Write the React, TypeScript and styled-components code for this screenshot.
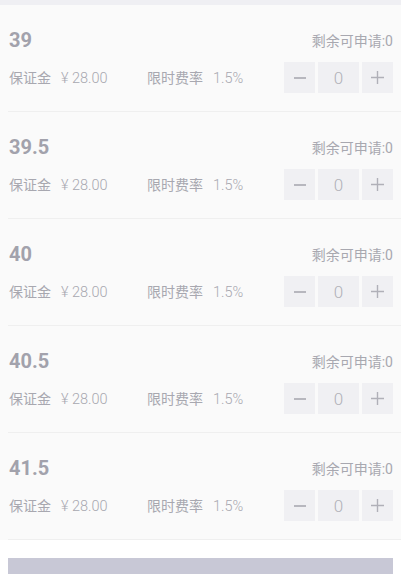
import styled, { createGlobalStyle } from "styled-components";

const GlobalStyle = createGlobalStyle`
  html, body {
    margin: 0;
    padding: 0;
    background: #fafafa;
  }
  body {
    font-family: Roboto, "Noto Sans CJK SC", sans-serif;
  }
`;

const Page = styled.div`
  width: 401px;
  height: 574px;
  overflow: hidden;
  background: #fafafa;
  border-top: 5px solid #efeff3;
  box-sizing: border-box;
`;

const List = styled.div`
  display: flex;
  flex-direction: column;
`;

const Item = styled.div`
  display: flex;
  flex-direction: column;
  padding: 23px 8px 20px 9px;
  height: 107px;
  box-sizing: border-box;
  position: relative;

  &::after {
    content: "";
    position: absolute;
    left: 8px;
    right: 0;
    bottom: 0;
    height: 1px;
    background: #efefef;
  }
`;

const Head = styled.div`
  display: flex;
  justify-content: space-between;
  align-items: center;
  height: 24px;
`;

const Size = styled.span`
  font-size: 20px;
  font-weight: 700;
  color: #a2a2ac;
`;

const Remain = styled.span`
  font-size: 14px;
  color: #a8a8b0;
`;

const Body = styled.div`
  display: flex;
  align-items: center;
  margin-top: 10px;
`;

const Info = styled.span<{ $width: number }>`
  width: ${p => p.$width}px;
  display: flex;
  align-items: baseline;
  gap: 10px;
  color: #a8a8b0;
  margin-top: -2px;
`;

const Label = styled.span`
  font-size: 14px;
`;

const Value = styled.span`
  font-size: 14.5px;
  font-weight: 300;
  white-space: pre;
`;

const Stepper = styled.div`
  margin-left: auto;
  display: flex;
  gap: 2px;
`;

const StepButton = styled.div`
  width: 31px;
  height: 31px;
  background: #f0f0f3;
  display: flex;
  align-items: center;
  justify-content: center;
  color: #b0b0b8;
`;

const StepValue = styled(StepButton)`
  width: 41px;
  margin: 0 1px;
  font-size: 17px;
  font-weight: 300;
  color: #b0b0b8;
`;

const Footer = styled.div`
  background: #fff;
  padding: 18px 8px 0 8px;
`;

const SubmitBar = styled.div`
  height: 30px;
  background: #c8c8d6;
`;

const sizes = ["39", "39.5", "40", "40.5", "41.5"];

export default function App() {
  return (
    <Page>
      <GlobalStyle />
      <List>
        {sizes.map(s => (
          <Item key={s}>
            <Head>
              <Size>{s}</Size>
              <Remain>剩余可申请:0</Remain>
            </Head>
            <Body>
              <Info $width={138}>
                <Label>保证金</Label>
                <Value>¥ 28.00</Value>
              </Info>
              <Info $width={110}>
                <Label>限时费率</Label>
                <Value>1.5%</Value>
              </Info>
              <Stepper>
                <StepButton>
                  <svg width="12" height="12" viewBox="0 0 12 12">
                    <path d="M0 6h12" stroke="currentColor" strokeWidth="1.8" />
                  </svg>
                </StepButton>
                <StepValue>0</StepValue>
                <StepButton>
                  <svg width="13" height="13" viewBox="0 0 13 13">
                    <path d="M0 6.5h13M6.5 0v13" stroke="currentColor" strokeWidth="1.4" />
                  </svg>
                </StepButton>
              </Stepper>
            </Body>
          </Item>
        ))}
      </List>
      <Footer>
        <SubmitBar />
      </Footer>
    </Page>
  );
}
